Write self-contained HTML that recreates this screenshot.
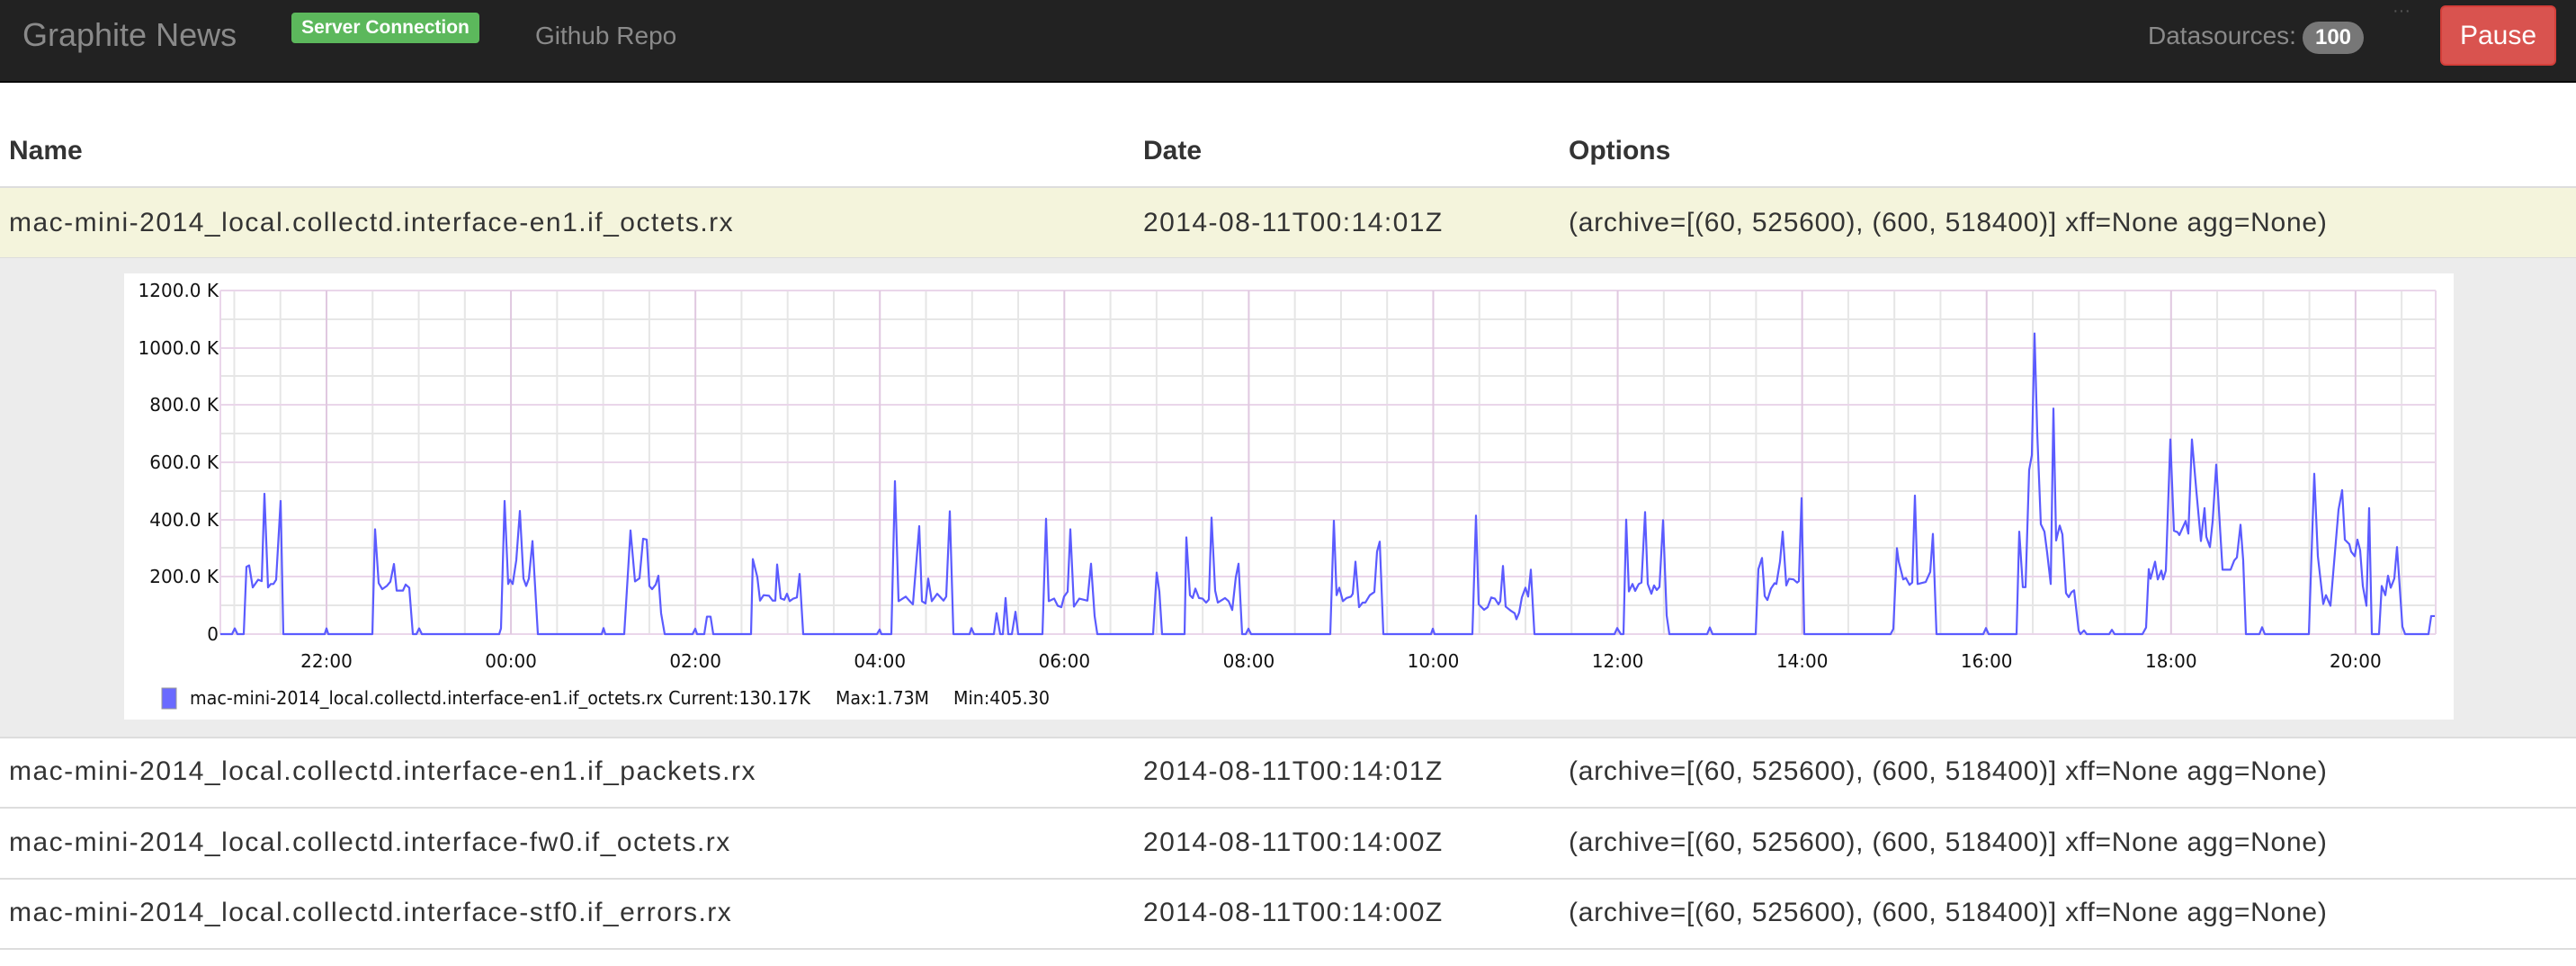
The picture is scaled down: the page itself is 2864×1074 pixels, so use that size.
<!DOCTYPE html>
<html><head><meta charset="utf-8"><style>
*{margin:0;padding:0;box-sizing:border-box}
body{width:2864px;height:1074px;overflow:hidden;background:#fff;font-family:"Liberation Sans",Arial,sans-serif;color:#333;position:relative}
.nav{position:absolute;left:0;top:0;width:2864px;height:92px;background:#222;border-bottom:2px solid #080808}
.a{position:absolute;white-space:nowrap}
.t{position:absolute;font-size:30px;color:#333;white-space:nowrap}
.n{letter-spacing:1.5px}
.d{letter-spacing:1.45px}
.o{letter-spacing:0.75px}
.line{position:absolute;left:0;width:2864px;height:2px;background:#ddd}
</style></head><body>
<div class="nav">
<div class="a" style="left:25px;top:19px;font-size:36px;color:#8a8a8a;line-height:40px">Graphite News</div>
<div class="a" style="left:324px;top:14px;width:209px;height:34px;background:#5cb85c;border-radius:4px;color:#fff;font-weight:bold;font-size:21px;line-height:34px;text-align:center">Server Connection</div>
<div class="a" style="left:595px;top:22px;font-size:28px;color:#8a8a8a;line-height:36px">Github Repo</div>
<div class="a" style="left:2388px;top:22px;font-size:28px;color:#8a8a8a;line-height:36px">Datasources:</div>
<div class="a" style="left:2560px;top:24px;width:68px;height:36px;background:#777;border-radius:18px;color:#fff;font-weight:bold;font-size:24px;line-height:36px;text-align:center">100</div>
<div class="a" style="left:2660px;top:0px;font-size:20px;color:#555;line-height:24px">···</div>
<div class="a" style="left:2713px;top:6px;width:129px;height:67px;background:#d9534f;border:2px solid #d43f3a;border-radius:6px;color:#fff;font-size:30px;line-height:63px;text-align:center">Pause</div>
</div>

<div class="t" style="left:10px;top:150px;font-weight:bold;line-height:36px">Name</div>
<div class="t" style="left:1271px;top:150px;font-weight:bold;line-height:36px">Date</div>
<div class="t" style="left:1744px;top:150px;font-weight:bold;line-height:36px">Options</div>
<div class="line" style="top:207px"></div>
<div class="a" style="left:0;top:209px;width:2864px;height:77px;background:#f4f4dc"></div>
<div class="a" style="left:0;top:286px;width:2864px;height:1px;background:#ddd"></div>
<div class="a" style="left:0;top:287px;width:2864px;height:533px;background:#ececec"></div>

<div class="t n" style="left:10px;top:230px;line-height:36px">mac-mini-2014_local.collectd.interface-en1.if_octets.rx</div>
<div class="t d" style="left:1271px;top:230px;line-height:36px">2014-08-11T00:14:01Z</div>
<div class="t o" style="left:1744px;top:230px;line-height:36px">(archive=[(60, 525600), (600, 518400)] xff=None agg=None)</div>

<svg class="a" style="left:0;top:0" width="2864" height="1074">
<rect x="138" y="304" width="2590" height="496" fill="#fff"/>
<g stroke="#e6e6e6" stroke-width="2">
<line x1="245" x2="2708" y1="355" y2="355"/><line x1="245" x2="2708" y1="418" y2="418"/><line x1="245" x2="2708" y1="482" y2="482"/><line x1="245" x2="2708" y1="546" y2="546"/><line x1="245" x2="2708" y1="609" y2="609"/><line x1="245" x2="2708" y1="673" y2="673"/>
</g>
<g id="minor" stroke="#e6e6e6" stroke-width="2"></g>
<g stroke="#ead6ea" stroke-width="2">
<line x1="245" x2="2708" y1="323" y2="323"/><line x1="245" x2="2708" y1="387" y2="387"/><line x1="245" x2="2708" y1="450" y2="450"/><line x1="245" x2="2708" y1="514" y2="514"/><line x1="245" x2="2708" y1="578" y2="578"/><line x1="245" x2="2708" y1="641" y2="641"/><line x1="245" x2="2708" y1="705" y2="705"/>
<line x1="245" x2="245" y1="323" y2="705"/><line x1="2708" x2="2708" y1="323" y2="705"/>
</g>
<g id="major" stroke="#e0c8e0" stroke-width="2"></g>
<g transform="translate(0,705) scale(1,-0.3183)">
<polyline fill="none" stroke="#5b5bff" stroke-width="2.2" vector-effect="non-scaling-stroke" stroke-linejoin="round" points="245,0 258,0 261,20 264,0 271,0 274,235 277,240 281,163 287,190 291,185 294,490 298,163 301,175 304,175 307,190 312,465 315,0 361,0 363,20 365,0 414,0 417,366 421,178 425,157 430,168 434,183 438,245 441,152 448,152 451,173 455,162 459,0 463,0 466,20 469,0 555,0 557,20 561,465 565,175 567,190 570,175 574,258 578,430 582,194 585,168 588,194 592,325 598,0 669,0 671,21 673,0 694,0 701,362 706,184 711,195 715,333 719,330 722,168 725,157 729,173 732,204 735,73 739,0 770,0 773,19 775,0 783,0 786,61 790,61 793,0 835,0 837,262 842,199 845,117 849,136 855,134 859,117 862,117 864,243 868,125 872,120 875,141 878,115 882,124 886,128 889,210 893,0 975,0 978,16 980,0 991,0 995,534 999,115 1007,131 1013,110 1015,104 1022,377 1025,115 1029,107 1032,194 1036,115 1042,141 1049,117 1052,131 1056,429 1060,0 1078,0 1080,21 1083,0 1105,0 1108,73 1112,0 1115,0 1118,126 1121,0 1125,0 1129,78 1132,0 1159,0 1163,403 1166,115 1172,124 1176,99 1180,94 1183,131 1187,148 1190,366 1194,96 1200,124 1209,117 1213,246 1217,63 1220,0 1282,0 1286,215 1289,148 1292,0 1317,0 1319,338 1323,136 1326,126 1329,159 1333,126 1337,124 1341,110 1344,121 1347,407 1351,152 1354,110 1362,126 1366,115 1370,84 1374,199 1377,246 1381,0 1385,0 1388,19 1391,0 1479,0 1483,396 1486,136 1489,162 1493,115 1497,126 1502,131 1504,141 1507,253 1511,94 1515,110 1518,110 1523,136 1528,147 1531,288 1534,323 1538,0 1591,0 1593,19 1595,0 1637,0 1641,414 1644,104 1650,85 1654,94 1658,128 1662,124 1666,104 1668,115 1671,238 1674,96 1680,81 1684,73 1686,52 1689,75 1692,128 1696,162 1699,131 1702,225 1706,0 1795,0 1798,21 1802,0 1805,0 1808,400 1811,149 1815,175 1818,151 1822,175 1825,180 1829,426 1832,175 1836,141 1839,170 1842,154 1845,165 1849,398 1853,65 1856,0 1898,0 1901,23 1904,0 1952,0 1955,227 1959,266 1962,133 1965,119 1969,159 1973,178 1975,175 1979,253 1982,358 1986,170 1989,193 1994,191 1998,180 2000,185 2003,475 2006,0 2102,0 2105,18 2109,300 2111,253 2116,191 2119,196 2123,172 2126,180 2129,484 2132,175 2141,182 2146,217 2149,350 2153,0 2205,0 2208,21 2211,0 2242,0 2245,358 2249,164 2252,164 2256,573 2259,625 2262,1050 2265,703 2269,384 2273,358 2276,285 2280,175 2283,788 2286,327 2290,379 2293,348 2297,143 2300,129 2303,146 2306,153 2311,13 2313,0 2317,13 2320,0 2345,0 2348,15 2351,0 2382,0 2386,23 2389,227 2391,193 2396,253 2399,191 2403,222 2405,191 2408,222 2413,680 2417,361 2421,356 2423,346 2430,395 2433,351 2437,680 2442,497 2447,325 2451,440 2453,340 2457,304 2460,393 2464,592 2471,225 2480,225 2484,257 2487,268 2491,382 2494,257 2497,0 2512,0 2515,24 2518,0 2567,0 2573,560 2577,272 2583,105 2586,136 2591,99 2600,435 2604,503 2607,330 2612,314 2614,288 2618,272 2621,330 2624,293 2627,168 2631,99 2634,440 2637,0 2645,0 2648,168 2652,136 2655,204 2658,162 2662,194 2665,304 2671,26 2674,0 2700,0 2703,63 2707,63"/>
</g>
<g font-family="DejaVu Sans, sans-serif" font-size="20" fill="#111" text-anchor="end">
<text x="243" y="330">1200.0 K</text><text x="243" y="394">1000.0 K</text><text x="243" y="457">800.0 K</text><text x="243" y="521">600.0 K</text><text x="243" y="585">400.0 K</text><text x="243" y="648">200.0 K</text><text x="243" y="712">0</text>
</g>
<g id="xl" font-family="DejaVu Sans, sans-serif" font-size="20" fill="#111" text-anchor="middle"></g>
<rect x="180" y="765" width="16" height="23" fill="#6a6aff" stroke="#999" stroke-width="1"/>
<g font-family="DejaVu Sans, sans-serif" font-size="20" fill="#111">
<text x="211" y="783" textLength="690" lengthAdjust="spacingAndGlyphs">mac-mini-2014_local.collectd.interface-en1.if_octets.rx Current:130.17K</text>
<text x="929" y="783" textLength="104" lengthAdjust="spacingAndGlyphs">Max:1.73M</text>
<text x="1060" y="783" textLength="107" lengthAdjust="spacingAndGlyphs">Min:405.30</text>
</g>
</svg>

<div class="line" style="top:819px;height:2px"></div>
<div class="t n" style="left:10px;top:840px;line-height:36px">mac-mini-2014_local.collectd.interface-en1.if_packets.rx</div>
<div class="t d" style="left:1271px;top:840px;line-height:36px">2014-08-11T00:14:01Z</div>
<div class="t o" style="left:1744px;top:840px;line-height:36px">(archive=[(60, 525600), (600, 518400)] xff=None agg=None)</div>
<div class="line" style="top:897px"></div>
<div class="t n" style="left:10px;top:919px;line-height:36px">mac-mini-2014_local.collectd.interface-fw0.if_octets.rx</div>
<div class="t d" style="left:1271px;top:919px;line-height:36px">2014-08-11T00:14:00Z</div>
<div class="t o" style="left:1744px;top:919px;line-height:36px">(archive=[(60, 525600), (600, 518400)] xff=None agg=None)</div>
<div class="line" style="top:976px"></div>
<div class="t n" style="left:10px;top:997px;line-height:36px">mac-mini-2014_local.collectd.interface-stf0.if_errors.rx</div>
<div class="t d" style="left:1271px;top:997px;line-height:36px">2014-08-11T00:14:00Z</div>
<div class="t o" style="left:1744px;top:997px;line-height:36px">(archive=[(60, 525600), (600, 518400)] xff=None agg=None)</div>
<div class="line" style="top:1054px"></div>
<script>
var ns="http://www.w3.org/2000/svg",mi=document.getElementById("minor"),ma=document.getElementById("major"),xl=document.getElementById("xl");
var labs=["22:00","00:00","02:00","04:00","06:00","08:00","10:00","12:00","14:00","16:00","18:00","20:00"];
for(var k=-2;k<48;k++){var x=363+k*51.27;if(x<=246||x>=2707)continue;var l=document.createElementNS(ns,"line");l.setAttribute("x1",x);l.setAttribute("x2",x);l.setAttribute("y1",323);l.setAttribute("y2",705);(k%4==0?ma:mi).appendChild(l);
if(k%4==0){var t=document.createElementNS(ns,"text");t.setAttribute("x",x);t.setAttribute("y",742);t.textContent=labs[k/4];xl.appendChild(t);}}
</script>
</body></html>
